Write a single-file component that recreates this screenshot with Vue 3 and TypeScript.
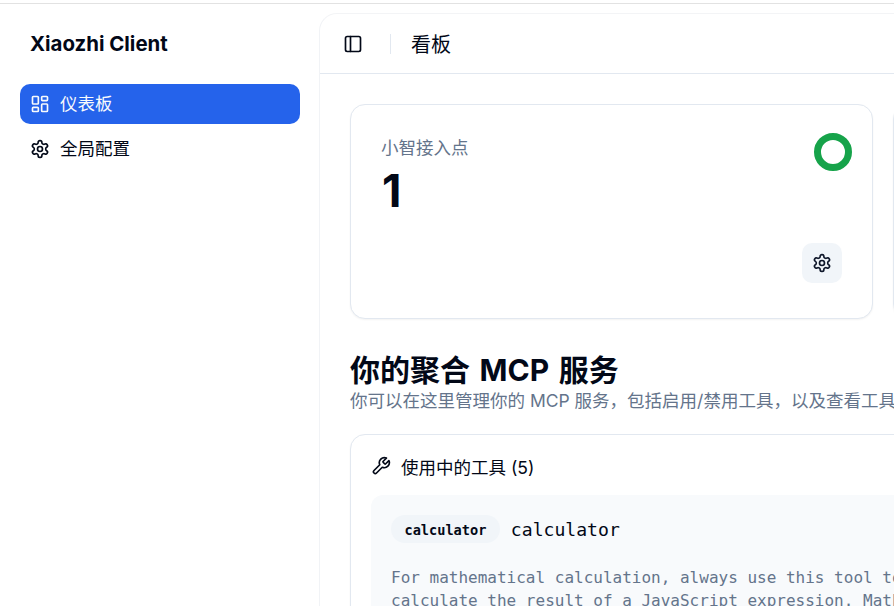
<template>
  <div class="app">
    <aside class="sidebar">
      <h1 class="brand">Xiaozhi Client</h1>
      <nav class="nav">
        <a
          v-for="item in navItems"
          :key="item.label"
          class="nav__item"
          :class="item.active && 'nav__item--active'"
        >
          <svg v-if="item.icon === 'grid'" class="icon" viewBox="0 0 24 24">
            <rect x="3" y="3" width="7" height="9" rx="1" />
            <rect x="14" y="3" width="7" height="5" rx="1" />
            <rect x="14" y="12" width="7" height="9" rx="1" />
            <rect x="3" y="16" width="7" height="5" rx="1" />
          </svg>
          <svg v-else class="icon" viewBox="0 0 24 24">
            <path :d="gearPath" />
            <circle cx="12" cy="12" r="3" />
          </svg>
          <span>{{ item.label }}</span>
        </a>
      </nav>
    </aside>

    <main class="main">
      <header class="topbar">
        <svg class="icon" viewBox="0 0 24 24">
          <rect x="3" y="3" width="18" height="18" rx="2" />
          <path d="M9 3v18" />
        </svg>
        <span class="topbar__sep" />
        <span class="topbar__title">看板</span>
      </header>

      <div class="content">
        <section class="stats">
          <div class="card stat">
            <div class="stat__head">
              <div>
                <div class="stat__label">小智接入点</div>
                <div class="stat__value">1</div>
              </div>
              <span class="ring" />
            </div>
            <div class="stat__foot">
              <button class="icon-btn">
                <svg class="icon" viewBox="0 0 24 24">
                  <path :d="gearPath" />
                  <circle cx="12" cy="12" r="3" />
                </svg>
              </button>
            </div>
          </div>
          <div class="card stat" />
        </section>

        <h2 class="title">你的聚合 MCP 服务</h2>
        <p class="subtitle">你可以在这里管理你的 MCP 服务，包括启用/禁用工具，以及查看工具的详细信息。</p>

        <section class="card tools">
          <div class="tools__head">
            <svg class="icon" viewBox="0 0 24 24">
              <path d="M14.7 6.3a1 1 0 0 0 0 1.4l1.6 1.6a1 1 0 0 0 1.4 0l3.77-3.77a6 6 0 0 1-7.94 7.94l-6.91 6.91a2.12 2.12 0 0 1-3-3l6.91-6.91a6 6 0 0 1 7.94-7.94l-3.76 3.76z" />
            </svg>
            <span>使用中的工具 (5)</span>
          </div>
          <div class="tool">
            <div class="tool__head">
              <span class="tool__badge">calculator</span>
              <span class="tool__name">calculator</span>
            </div>
            <p class="tool__desc">For mathematical calculation, always use this tool to calculate the result of a JavaScript expression. Math object and basic operations are available.</p>
          </div>
        </section>
      </div>
    </main>
  </div>
</template>

<script setup lang="ts">
interface NavItem {
  label: string
  icon: 'grid' | 'gear'
  active?: boolean
}

const navItems: NavItem[] = [
  { label: '仪表板', icon: 'grid', active: true },
  { label: '全局配置', icon: 'gear' },
]

const gearPath =
  'M12.22 2h-.44a2 2 0 0 0-2 2v.18a2 2 0 0 1-1 1.73l-.43.25a2 2 0 0 1-2 0l-.15-.08a2 2 0 0 0-2.73.73l-.22.38a2 2 0 0 0 .73 2.73l.15.1a2 2 0 0 1 1 1.72v.51a2 2 0 0 1-1 1.74l-.15.09a2 2 0 0 0-.73 2.73l.22.38a2 2 0 0 0 2.73.73l.15-.08a2 2 0 0 1 2 0l.43.25a2 2 0 0 1 1 1.73V20a2 2 0 0 0 2 2h.44a2 2 0 0 0 2-2v-.18a2 2 0 0 1 1-1.73l.43-.25a2 2 0 0 1 2 0l.15.08a2 2 0 0 0 2.73-.73l.22-.39a2 2 0 0 0-.73-2.73l-.15-.08a2 2 0 0 1-1-1.74v-.5a2 2 0 0 1 1-1.74l.15-.09a2 2 0 0 0 .73-2.73l-.22-.38a2 2 0 0 0-2.73-.73l-.15.08a2 2 0 0 1-2 0l-.43-.25a2 2 0 0 1-1-1.73V4a2 2 0 0 0-2-2z'
</script>

<style>
html,
body {
  margin: 0;
  height: 100%;
  overflow: hidden;
  background: #fff;
}
</style>

<style scoped>
.app {
  display: flex;
  box-sizing: border-box;
  width: 894px;
  height: 603px;
  margin-top: 3px;
  overflow: hidden;
  border-top: 1px solid #e2e2e2;
  background: #fff;
  color: #020817;
  font-family: Inter, "Noto Sans CJK SC", sans-serif;
}

/* sidebar */
.sidebar {
  flex: 0 0 319px;
  box-sizing: border-box;
  padding: 0 19px 0 20px;
}
.brand {
  margin: 26px 10px;
  font-size: 20.4px;
  line-height: 28px;
  font-weight: 700;
}
.nav {
  display: flex;
  flex-direction: column;
  gap: 5px;
}
.nav__item {
  display: flex;
  align-items: center;
  gap: 10px;
  height: 40px;
  padding: 0 10px;
  border-radius: 10px;
  font-size: 17.5px;
  line-height: 24px;
}
.nav__item span {
  margin-bottom: 1px;
}
.nav__item--active {
  background: #2563eb;
  color: #f8fafc;
}
.nav__item--active span {
  margin-bottom: 0;
}

.icon {
  width: 20px;
  height: 20px;
  flex: none;
  fill: none;
  stroke: currentColor;
  stroke-width: 2;
  stroke-linecap: round;
  stroke-linejoin: round;
}

/* main */
.main {
  flex: 0 0 1200px;
  box-sizing: border-box;
  margin-top: 9px;
  background: #fff;
  border-top-left-radius: 18px;
  border-left: 1px solid #f1f3f6;
  border-top: 1px solid #f3f4f6;
}
.topbar {
  display: flex;
  align-items: center;
  height: 59px;
  padding: 0 23px;
  border-bottom: 1px solid #e2e8f0;
}
.topbar__sep {
  width: 1px;
  height: 20px;
  margin: 0 20px 0 27px;
  background: #e2e8f0;
}
.topbar__title {
  font-size: 20px;
}

.content {
  padding: 30px;
}
.stats {
  display: grid;
  grid-template-columns: 523px 523px;
  gap: 20px;
}
.card {
  box-sizing: border-box;
  border: 1px solid #e2e8f0;
  border-radius: 15px;
  background: #fff;
  box-shadow: 0 1px 2px rgba(0, 0, 0, 0.05);
}
.stat {
  display: flex;
  flex-direction: column;
  justify-content: space-between;
  height: 215px;
  padding: 28px 30px 35px 30px;
}
.stat__head {
  display: flex;
  justify-content: space-between;
  align-items: flex-start;
  margin-right: -10px;
}
.stat__label {
  font-size: 17.5px;
  line-height: 30px;
  color: #64748b;
}
.stat__value {
  margin: 3px 0 0 1px;
  font-size: 45px;
  line-height: 50px;
  font-weight: 700;
}
.ring {
  box-sizing: border-box;
  width: 38px;
  height: 38px;
  border: 7px solid #16a34a;
  border-radius: 50%;
}
.stat__foot {
  display: flex;
  justify-content: flex-end;
}
.icon-btn {
  display: flex;
  align-items: center;
  justify-content: center;
  width: 40px;
  height: 40px;
  padding: 0;
  border: 0;
  border-radius: 10px;
  background: #f1f5f9;
  color: #0f172a;
}

.title {
  margin: 33px 0 0;
  font-size: 30px;
  line-height: 36px;
  font-weight: 700;
  word-spacing: 2.5px;
}
.subtitle {
  margin: 0;
  font-size: 17.5px;
  line-height: 25px;
  color: #64748b;
  white-space: nowrap;
}

/* tools */
.tools {
  margin-top: 21px;
  padding: 17px 20px 20px;
  height: 600px;
}
.tools__head {
  display: flex;
  align-items: center;
  gap: 10px;
  height: 28px;
  font-size: 17.5px;
}
.tool {
  margin-top: 15px;
  padding: 20px;
  border-radius: 12px;
  background: #f8fafc;
}
.tool__head {
  display: flex;
  align-items: center;
  gap: 11px;
  font-family: "DejaVu Sans Mono", monospace;
}
.tool__badge {
  height: 28px;
  padding: 0 13.5px;
  line-height: 30px;
  border-radius: 14px;
  background: #f1f5f9;
  font-size: 13.6px;
  font-weight: 700;
}
.tool__name {
  font-size: 18.1px;
}
.tool__desc {
  max-width: 570px;
  margin: 23px 0 0;
  font-family: "DejaVu Sans Mono", monospace;
  font-size: 16px;
  line-height: 23px;
  color: #64748b;
}
</style>
